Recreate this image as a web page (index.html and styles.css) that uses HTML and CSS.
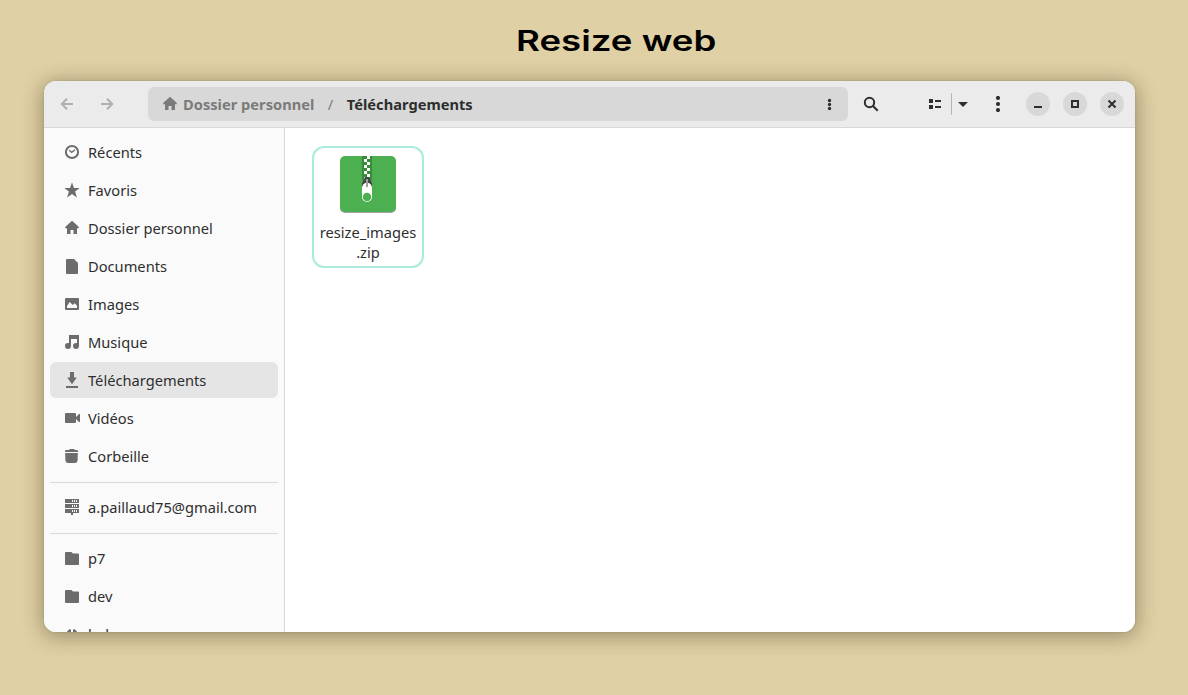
FILE: index.html
```html
<!DOCTYPE html>
<html lang="fr">
<head>
<meta charset="utf-8">
<title>Resize web</title>
<link rel="stylesheet" href="styles.css">
</head>
<body>
<svg class="defs" width="0" height="0" aria-hidden="true">
  <symbol id="home" viewBox="0 0 16 16"><path d="M8 .8 1.200 7v1.200H3v5.300q0 .5.500.5H6.500v-4h3v4h3q.5 0 .5-.5V8.200h1.800V7L12 4.300z"/></symbol>
  <symbol id="folder" viewBox="0 0 16 16"><path d="M1 3Q1 2 2 2H7.500L9 3.500h5q1 0 1 1V14q0 1-1 1H2q-1 0-1-1z"/></symbol>
</svg>
<main class="page">
  <h1 class="title">Resize web</h1>
  <section class="window">
    <header class="toolbar">
      <nav class="history">
        <svg class="icon" viewBox="0 0 16 16"><path class="line" d="M14 8H3M8 2.800 2.800 8 8 13.200"/></svg>
        <svg class="icon" viewBox="0 0 16 16"><path class="line" d="M2 8h11M8 2.800 13.200 8 8 13.200"/></svg>
      </nav>
      <div class="pathbar">
        <svg class="icon home"><use href="#home"/></svg>
        <span class="crumb">Dossier personnel</span>
        <span class="slash">/</span>
        <span class="crumb current">Téléchargements</span>
        <svg class="icon more" viewBox="0 0 16 16"><circle cx="8.500" cy="4.500" r="1.650"/><circle cx="8.500" cy="8.500" r="1.650"/><circle cx="8.500" cy="12.500" r="1.650"/></svg>
      </div>
      <svg class="icon search" viewBox="0 0 16 16"><circle class="line" cx="6.500" cy="6.500" r="4.700"/><path class="line" d="m10 10 4.700 4.700"/></svg>
      <svg class="icon view" viewBox="0 0 16 16"><path d="M2 3h4v4H2zM2 9h4v4H2zM8 4h6v2H8zM8 10h6v2H8z"/></svg>
      <span class="divider"></span>
      <svg class="icon caret" viewBox="0 0 16 16"><path d="M3 6h10l-5 5z"/></svg>
      <svg class="icon menu" viewBox="0 0 16 16"><circle cx="8" cy="2" r="2.100"/><circle cx="8" cy="8" r="2.100"/><circle cx="8" cy="14" r="2.100"/></svg>
      <div class="controls">
        <span class="control"><svg class="icon" viewBox="0 0 16 16"><path d="M4 10h8v2H4z"/></svg></span>
        <span class="control"><svg class="icon" viewBox="0 0 16 16"><path class="line" d="M5 5h6v6H5z"/></svg></span>
        <span class="control"><svg class="icon" viewBox="0 0 16 16"><path class="line" d="m4.500 4.500 7 7m0-7-7 7"/></svg></span>
      </div>
    </header>
    <div class="content">
      <aside class="sidebar">
        <div class="place"><svg class="icon" viewBox="0 0 16 16"><circle class="line" cx="8" cy="8" r="6.100"/><path class="line thin" d="m5.200 6.300 2.500 2 3.300-2.600"/></svg>Récents</div>
        <div class="place"><svg class="icon" viewBox="0 0 16 16"><path d="m8 .3 1.900 5.600 5.800.1-4.600 3.500 1.800 5.900L8 12l-4.900 3.400 1.800-5.900L.3 6l5.800-.1z"/></svg>Favoris</div>
        <div class="place"><svg class="icon"><use href="#home"/></svg>Dossier personnel</div>
        <div class="place"><svg class="icon" viewBox="0 0 16 16"><path d="M2 2q0-1 1-1h7l4 4v10q0 1-1 1H3q-1 0-1-1z"/></svg>Documents</div>
        <div class="place"><svg class="icon" viewBox="0 0 16 16"><path fill-rule="evenodd" d="M1 3q0-1 1-1h12q1 0 1 1v10q0 1-1 1H2q-1 0-1-1zM3 12h10V9.500L10.600 7.200 8.800 9 5.700 6 3 10z"/></svg>Images</div>
        <div class="place"><svg class="icon" viewBox="0 0 16 16"><path d="M5 1h10v11a3 3 0 1 1-3-3h1V5H7v7a3 3 0 1 1-3-3h1z"/></svg>Musique</div>
        <div class="place selected"><svg class="icon" viewBox="0 0 16 16"><path d="M6 0h4v5.500h2.800L8 12.300 3.200 5.500H6zM2 14h12v2H2z"/></svg>Téléchargements</div>
        <div class="place"><svg class="icon" viewBox="0 0 16 16"><path d="M1 4q0-1 1-1h9q1 0 1 1v3l3-3h1v8h-1l-3-3v3q0 1-1 1H2q-1 0-1-1z"/></svg>Vidéos</div>
        <div class="place"><svg class="icon" viewBox="0 0 16 16"><path d="M1 4V3q0-1 1-1h3q.3-1 1.500-1h3q1.200 0 1.500 1h2q1 0 1 1v1zM1.200 5h12.600l-.2 7.500q-.6 2.500-2.600 2.500H4q-2 0-2.600-2.500z"/></svg>Corbeille</div>
        <hr class="separator">
        <div class="place"><svg class="icon" viewBox="0 0 16 16"><path fill-rule="evenodd" d="M1 0h14v4H1zM1 5h14v4H1zM1 10h14v4H9v2H7v-2H1zM8 1v2h1V1zM10 1v2h1V1zM12 1v2h1V1zM8 6v2h1V6zM10 6v2h1V6zM12 6v2h1V6zM8 11v2h1v-2zM10 11v2h1v-2zM12 11v2h1v-2z"/></svg>a.paillaud75@gmail.com</div>
        <hr class="separator">
        <div class="place"><svg class="icon"><use href="#folder"/></svg>p7</div>
        <div class="place"><svg class="icon"><use href="#folder"/></svg>dev</div>
        <div class="place"><svg class="icon" viewBox="0 0 16 16"><path d="M5.500 3Q7 3 7 4.500v9L1 8zM10.500 3Q9 3 9 4.500v9L15 8z"/></svg>bak</div>
      </aside>
      <div class="files">
        <article class="file">
          <svg class="archive" viewBox="0 0 64 64">
            <rect class="archive-shadow" x="4" y="5" width="56" height="56" rx="5"/>
            <rect class="archive-body" x="4" y="4" width="56" height="56" rx="5"/>
            <path class="zip-track" d="M26 4h10v24H26z"/>
            <path class="zip-teeth" d="M31 4h3v3h-3zM28 7h3v3h-3zM31 10h3v3h-3zM28 13h3v3h-3zM31 16h3v3h-3zM28 19h3v3h-3zM31 22h3v3h-3zM28 25h3v2h-3z"/>
            <path class="zip-slider" d="M29 25h4l3 6v4H26v-4z"/>
            <path class="zip-pull" d="M26 35q1-3 3-4h4q2 1 3 4v10a5 5 0 0 1-10 0z"/>
            <path class="zip-pin" d="M30 27h2v8h-2z"/>
            <circle class="archive-body" cx="31" cy="45" r="4.200"/>
          </svg>
          <div class="file-name">resize_images<br>.zip</div>
        </article>
      </div>
    </div>
  </section>
</main>
</body>
</html>
```
FILE: styles.css
```css
* { box-sizing: border-box; }
body {
  margin: 0;
  background: #e0d0a5;
  color: #2e2e2e;
  font: 14.667px/20px "Noto Sans", sans-serif;
}
.defs { display: block; }
.page { height: 695px; padding: 19px 53px 0 44px; overflow: hidden; }
.title {
  width: 200px;
  height: 42px;
  margin: 0 0 20px 472px;
  color: #000;
  font: 600 28px/44px Inter, sans-serif;
  white-space: nowrap;
  transform: scaleX(1.307);
  transform-origin: left;
}
.window {
  height: 551px;
  display: flex;
  flex-direction: column;
  border-radius: 12px;
  overflow: hidden;
  background: #fff;
  box-shadow: 0 3px 20px 2px rgba(30, 22, 0, .35), 0 0 2px rgba(30, 22, 0, .2);
}
.icon { width: 16px; height: 16px; flex: none; fill: currentColor; }
.line { fill: none; stroke: currentColor; stroke-width: 2; }
.thin { stroke-width: 1.3; }
.toolbar {
  height: 47px;
  flex: none;
  display: flex;
  align-items: center;
  padding: 0 11px 1px 15px;
  background: #ebebeb;
  border-bottom: 1px solid #d8d8d8;
}
.history { display: flex; gap: 24px; width: 89px; color: #b0b0b0; }
.pathbar {
  width: 700px;
  height: 34px;
  display: flex;
  align-items: center;
  padding: 0 11px 0 13.5px;
  border-radius: 6px;
  background: #d8d8d8;
  color: #7b7b7b;
}
.home { margin-right: 5.5px; }
.crumb { font-weight: 700; }
.slash { margin: 0 13.5px; }
.current { color: #2e2e2e; }
.more { margin-left: auto; color: #2e2e2e; }
.search { margin-left: 15px; }
.view { margin-left: 48px; }
.divider { width: 1px; height: 22px; margin: 0 3px 0 8px; background: #b5b5b5; }
.menu { margin-left: 19px; }
.controls { display: flex; gap: 13px; margin-left: auto; }
.control {
  width: 24px;
  height: 24px;
  display: flex;
  align-items: center;
  justify-content: center;
  border-radius: 50%;
  background: #d8d8d8;
}
.content { flex: 1; min-height: 0; display: flex; }
.sidebar {
  width: 241px;
  flex: none;
  padding: 6px 6px 0;
  overflow: hidden;
  background: #fafafa;
  border-right: 1px solid #d8d8d8;
}
.place {
  height: 36px;
  margin-bottom: 2px;
  padding-left: 14px;
  display: flex;
  align-items: center;
  gap: 8px;
  border-radius: 6px;
}
.place .icon { color: #6c6c6c; }
.selected { background: #e5e5e5; }
.separator { height: 1px; margin: 8px 0 6px; border: 0; background: #d9d9d9; }
.files { flex: 1; padding: 18px 27px; background: #fff; }
.file {
  width: 112px;
  height: 122px;
  padding-top: 4px;
  display: flex;
  flex-direction: column;
  align-items: center;
  border: 2px solid #a9ecdd;
  border-radius: 12px;
  text-align: center;
}
.archive { width: 64px; height: 64px; margin-bottom: 6px; }
.archive-shadow { fill: #a3a3a3; }
.archive-body { fill: #4caf50; }
.zip-track { fill: #378b3b; }
.zip-teeth, .zip-pull { fill: #fff; }
.zip-slider { fill: #464646; }
.zip-pin { fill: #a0a0a0; }
```
